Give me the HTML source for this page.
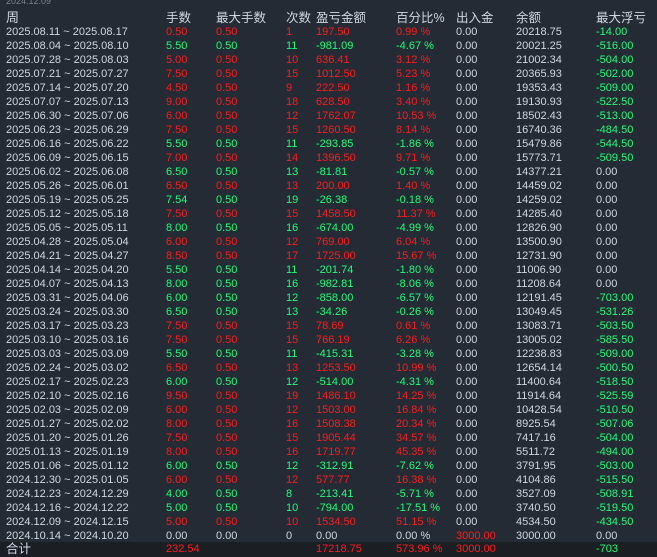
<!DOCTYPE html>
<html><head><meta charset="utf-8"><style>
body{margin:0;width:657px;height:557px;background:#252b35;overflow:hidden;font-family:"Liberation Sans","Noto Sans CJK SC",sans-serif;font-size:11px;color:#cfd6e2;position:relative}
.row{position:absolute;left:0;width:657px;height:14px;line-height:14px;white-space:nowrap}
.row span{position:absolute;top:0}
.c0{left:6px}.c1{left:166px}.c2{left:216px}.c3{left:286px}.c4{left:316px}.c5{left:396px}.c6{left:456px}.c7{left:516px}.c8{left:596px}
.r{color:#ff1a1a}.g{color:#19ff7a}
.hd{font-size:12.5px;color:#cfd6e2}
.tot{background:#1b1e23;height:15px;line-height:15px;top:542px}
</style></head><body>
<div class="row" style="top:-6px;color:#7a8290;font-size:9px"><span class="c0">2024.12.09</span></div>
<div class="row hd" style="top:11px"><span class="c0" style="font-size:13px">周</span><span class="c1">手数</span><span class="c2">最大手数</span><span class="c3">次数</span><span class="c4">盈亏金额</span><span class="c5">百分比%</span><span class="c6">出入金</span><span class="c7">余额</span><span class="c8">最大浮亏</span></div>
<div id="t"></div>
<script>
var d=[
["2025.08.11 ~ 2025.08.17","r","0.50","0.50","1","197.50","0.99 %","20218.75","-14.00"],
["2025.08.04 ~ 2025.08.10","g","5.50","0.50","11","-981.09","-4.67 %","20021.25","-516.00"],
["2025.07.28 ~ 2025.08.03","r","5.00","0.50","10","636.41","3.12 %","21002.34","-504.00"],
["2025.07.21 ~ 2025.07.27","r","7.50","0.50","15","1012.50","5.23 %","20365.93","-502.00"],
["2025.07.14 ~ 2025.07.20","r","4.50","0.50","9","222.50","1.16 %","19353.43","-509.00"],
["2025.07.07 ~ 2025.07.13","r","9.00","0.50","18","628.50","3.40 %","19130.93","-522.50"],
["2025.06.30 ~ 2025.07.06","r","6.00","0.50","12","1762.07","10.53 %","18502.43","-513.00"],
["2025.06.23 ~ 2025.06.29","r","7.50","0.50","15","1260.50","8.14 %","16740.36","-484.50"],
["2025.06.16 ~ 2025.06.22","g","5.50","0.50","11","-293.85","-1.86 %","15479.86","-544.50"],
["2025.06.09 ~ 2025.06.15","r","7.00","0.50","14","1396.50","9.71 %","15773.71","-509.50"],
["2025.06.02 ~ 2025.06.08","g","6.50","0.50","13","-81.81","-0.57 %","14377.21","0.00"],
["2025.05.26 ~ 2025.06.01","r","6.50","0.50","13","200.00","1.40 %","14459.02","0.00"],
["2025.05.19 ~ 2025.05.25","g","7.54","0.50","19","-26.38","-0.18 %","14259.02","0.00"],
["2025.05.12 ~ 2025.05.18","r","7.50","0.50","15","1458.50","11.37 %","14285.40","0.00"],
["2025.05.05 ~ 2025.05.11","g","8.00","0.50","16","-674.00","-4.99 %","12826.90","0.00"],
["2025.04.28 ~ 2025.05.04","r","6.00","0.50","12","769.00","6.04 %","13500.90","0.00"],
["2025.04.21 ~ 2025.04.27","r","8.50","0.50","17","1725.00","15.67 %","12731.90","0.00"],
["2025.04.14 ~ 2025.04.20","g","5.50","0.50","11","-201.74","-1.80 %","11006.90","0.00"],
["2025.04.07 ~ 2025.04.13","g","8.00","0.50","16","-982.81","-8.06 %","11208.64","0.00"],
["2025.03.31 ~ 2025.04.06","g","6.00","0.50","12","-858.00","-6.57 %","12191.45","-703.00"],
["2025.03.24 ~ 2025.03.30","g","6.50","0.50","13","-34.26","-0.26 %","13049.45","-531.26"],
["2025.03.17 ~ 2025.03.23","r","7.50","0.50","15","78.69","0.61 %","13083.71","-503.50"],
["2025.03.10 ~ 2025.03.16","r","7.50","0.50","15","766.19","6.26 %","13005.02","-585.50"],
["2025.03.03 ~ 2025.03.09","g","5.50","0.50","11","-415.31","-3.28 %","12238.83","-509.00"],
["2025.02.24 ~ 2025.03.02","r","6.50","0.50","13","1253.50","10.99 %","12654.14","-500.50"],
["2025.02.17 ~ 2025.02.23","g","6.00","0.50","12","-514.00","-4.31 %","11400.64","-518.50"],
["2025.02.10 ~ 2025.02.16","r","9.50","0.50","19","1486.10","14.25 %","11914.64","-525.59"],
["2025.02.03 ~ 2025.02.09","r","6.00","0.50","12","1503.00","16.84 %","10428.54","-510.50"],
["2025.01.27 ~ 2025.02.02","r","8.00","0.50","16","1508.38","20.34 %","8925.54","-507.06"],
["2025.01.20 ~ 2025.01.26","r","7.50","0.50","15","1905.44","34.57 %","7417.16","-504.00"],
["2025.01.13 ~ 2025.01.19","r","8.00","0.50","16","1719.77","45.35 %","5511.72","-494.00"],
["2025.01.06 ~ 2025.01.12","g","6.00","0.50","12","-312.91","-7.62 %","3791.95","-503.00"],
["2024.12.30 ~ 2025.01.05","r","6.00","0.50","12","577.77","16.38 %","4104.86","-515.50"],
["2024.12.23 ~ 2024.12.29","g","4.00","0.50","8","-213.41","-5.71 %","3527.09","-508.91"],
["2024.12.16 ~ 2024.12.22","g","5.00","0.50","10","-794.00","-17.51 %","3740.50","-519.50"],
["2024.12.09 ~ 2024.12.15","r","5.00","0.50","10","1534.50","51.15 %","4534.50","-434.50"],
["2024.10.14 ~ 2024.10.20","","0.00","0.00","0","0.00","0.00 %","3000.00","0.00"]];
var h="";
d.forEach(function(r,i){var c=r[1],f=r[8]=="0.00"?"":"g",io=i==36?'<span class="c6 r">3000.00</span>':'<span class="c6">0.00</span>';
h+='<div class="row" style="top:'+(25+i*14)+'px"><span class="c0">'+r[0]+'</span><span class="c1 '+c+'">'+r[2]+'</span><span class="c2 '+c+'">'+r[3]+'</span><span class="c3 '+c+'">'+r[4]+'</span><span class="c4 '+c+'">'+r[5]+'</span><span class="c5 '+c+'">'+r[6]+'</span>'+io+'<span class="c7">'+r[7]+'</span><span class="c8 '+f+'">'+r[8]+'</span></div>';});
document.getElementById("t").innerHTML=h;
</script>
<div class="row tot"><span class="c0" style="font-size:12.5px">合计</span><span class="c1 r">232.54</span><span class="c4 r">17218.75</span><span class="c5 r">573.96 %</span><span class="c6 r">3000.00</span><span class="c8 g">-703</span></div>
</body></html>
